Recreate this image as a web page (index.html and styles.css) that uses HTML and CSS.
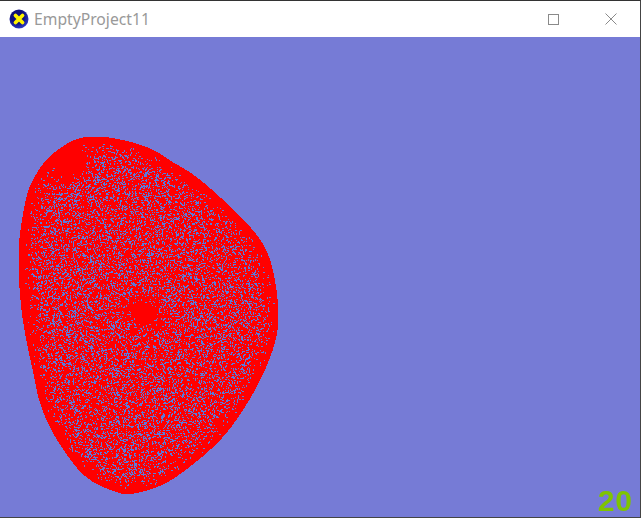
FILE: index.html
```html
<!DOCTYPE html>
<html lang="en">
<head>
  <meta charset="UTF-8">
  <title>EmptyProject11</title>
  <link rel="stylesheet" href="styles.css">
</head>
<body>
  <div class="window">
    <div class="titlebar">
      <svg class="app-icon" width="20" height="20" viewBox="0 0 20 20">
        <defs>
          <radialGradient id="ball" cx="0.4" cy="0.35" r="0.75">
            <stop offset="0.45" stop-color="#10107a"/>
            <stop offset="0.85" stop-color="#2a35c0"/>
            <stop offset="1" stop-color="#8f96e0"/>
          </radialGradient>
        </defs>
        <circle cx="10" cy="10" r="9.5" fill="url(#ball)"/>
        <path d="M6.5 6.5 L13.5 13.5 M13.5 6.5 L6.5 13.5" stroke="#fff200" stroke-width="3.8" stroke-linecap="round"/>
      </svg>
      <span class="title">EmptyProject11</span>
      <div class="controls">
        <div class="control">
          <svg width="11" height="11" viewBox="0 0 11 11"><rect x="0.5" y="0.5" width="10" height="10" fill="none" stroke="#8a8a8a"/></svg>
        </div>
        <div class="control">
          <svg width="12" height="12" viewBox="0 0 12 12"><path d="M0.5 0.5L11.5 11.5M11.5 0.5L0.5 11.5" stroke="#8a8a8a"/></svg>
        </div>
      </div>
    </div>
    <div class="viewport">
      <canvas id="scene" width="640" height="480"></canvas>
      <div class="fps">20</div>
    </div>
  </div>
  <script src="app.js"></script>
</body>
</html>
```

FILE: styles.css
```css
html, body {
  margin: 0;
  padding: 0;
  height: 100%;
  overflow: hidden;
  background-color: #444;
}

.window {
  display: flex;
  flex-direction: column;
  height: 100vh;
  box-sizing: border-box;
  border-top: 1px solid #333;
  border-right: 1px solid #444;
  border-bottom: 1px solid #444;
}

.titlebar {
  display: flex;
  align-items: center;
  height: 36px;
  flex-shrink: 0;
  padding-left: 9px;
  background-color: #fff;
}

.app-icon {
  margin-right: 5px;
}

.title {
  font-family: "Noto Sans", sans-serif;
  font-size: 15.7px;
  color: #999;
}

.controls {
  display: flex;
  margin-left: auto;
}

.control {
  display: flex;
  align-items: center;
  justify-content: center;
  width: 58px;
  height: 36px;
}

.viewport {
  position: relative;
  flex: 1;
  background-color: #767bd6;
}

#scene {
  display: block;
}

.fps {
  position: absolute;
  right: 7px;
  bottom: 2px;
  font-family: "Liberation Sans", sans-serif;
  font-weight: bold;
  font-size: 30px;
  line-height: 28px;
  letter-spacing: 1px;
  color: #7fc400;
}
```

FILE: app.js
```js
const canvas = document.getElementById('scene');
const ctx = canvas.getContext('2d');
const TOP = 37; // canvas starts under the title bar

// outline of the mesh, window coordinates
const outline = [
  [93,137],[110,137],[150,147],[170,161],[187,170],[203,182],[220,197],[237,213],[253,230],[267,250],
  [275,278],[279,315],[276,340],[268,363],[257,387],[243,410],[227,433],[207,453],[183,472],[160,487],
  [128,495],[117,492],[97,485],[80,472],[67,455],[55,437],[45,417],[38,397],[35,380],[26,340],[20,300],
  [18,250],[22,220],[27,193],[33,180],[43,163],[57,150],[77,138]
];

// catmull-rom through the outline
let points = [];
const n = outline.length;
for (let i = 0; i < n; i++) {
  const p0 = outline[(i + n - 1) % n], p1 = outline[i];
  const p2 = outline[(i + 1) % n], p3 = outline[(i + 2) % n];
  for (let s = 0; s < 6; s++) {
    const t = s / 6, t2 = t * t, t3 = t2 * t;
    points.push([
      0.5 * (2 * p1[0] + (p2[0] - p0[0]) * t + (2 * p0[0] - 5 * p1[0] + 4 * p2[0] - p3[0]) * t2 + (3 * p1[0] - p0[0] - 3 * p2[0] + p3[0]) * t3),
      0.5 * (2 * p1[1] + (p2[1] - p0[1]) * t + (2 * p0[1] - 5 * p1[1] + 4 * p2[1] - p3[1]) * t2 + (3 * p1[1] - p0[1] - 3 * p2[1] + p3[1]) * t3)
    ]);
  }
}

// the measured points are rough, so even them out
for (let pass = 0; pass < 12; pass++) {
  points = points.map((p, i) => {
    const a = points[(i + points.length - 1) % points.length];
    const b = points[(i + 1) % points.length];
    return [(a[0] + 2 * p[0] + b[0]) / 4, (a[1] + 2 * p[1] + b[1]) / 4];
  });
}

const path = new Path2D();
points.forEach((p, i) => i ? path.lineTo(p[0], p[1]) : path.moveTo(p[0], p[1]));
path.closePath();

let seed = 20;
const rand = () => {
  seed = (seed + 0x6d2b79f5) | 0;
  let t = Math.imul(seed ^ (seed >>> 15), 1 | seed);
  t = (t + Math.imul(t ^ (t >>> 7), 61 | t)) ^ t;
  return ((t ^ (t >>> 14)) >>> 0) / 4294967296;
};

const edgeDist = (x, y) => {
  let best = 1e9;
  for (const p of points) {
    const d = (p[0] - x) ** 2 + (p[1] - y) ** 2;
    if (d < best) best = d;
  }
  return Math.sqrt(best);
};

const smooth = (v, a, b) => Math.max(0, Math.min(1, (v - a) / (b - a)));

// red fill first, then the gaps in the mesh on top
const cells = [];
for (let y = 130; y < 500; y++) {
  for (let x = 10; x < 285; x++) {
    if (!ctx.isPointInPath(path, x + 0.5, y + 0.5)) continue;
    ctx.fillStyle = '#ff0000';
    ctx.fillRect(x, y - TOP, 1, 1);
    let density = 0.2 * smooth(edgeDist(x, y), 4, 20);
    density *= smooth(Math.hypot(x - 143, y - 313), 8, 26);
    density *= smooth(Math.hypot(x - 68, y - 158), 14, 32);
    if (rand() < density) cells.push([x, y]);
  }
}

ctx.fillStyle = '#5a7adc';
for (const [x, y] of cells) {
  ctx.fillRect(x, y - TOP, 1, 1);
  const r = rand();
  if (r < 0.22) ctx.fillRect(x + 1, y - TOP, 1, 1);
  else if (r < 0.44) ctx.fillRect(x, y - TOP + 1, 1, 1);
}
```
